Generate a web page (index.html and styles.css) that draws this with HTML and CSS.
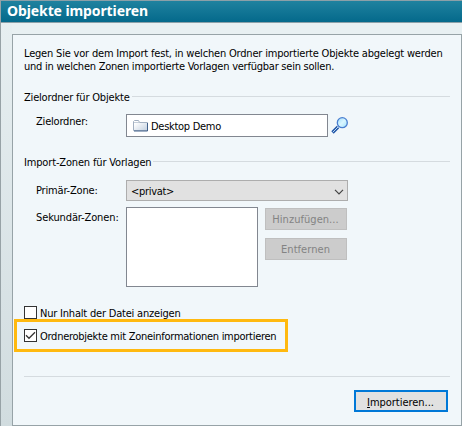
FILE: index.html
```html
<!DOCTYPE html>
<html lang="de">
<head>
<meta charset="utf-8">
<title>Objekte importieren</title>
<link rel="stylesheet" href="styles.css">
</head>
<body>
<div class="window">
  <header class="titlebar"><h1>Objekte importieren</h1></header>
  <main class="panel">
    <p class="intro"><span class="line-a">Legen Sie vor dem Import fest, in welchen Ordner importierte Objekte abgelegt werden</span><br><span class="line-b">und in welchen Zonen importierte Vorlagen verfügbar sein sollen.</span></p>

    <h2 class="legend legend-target"><span>Zielordner für Objekte</span></h2>
    <div class="row row-target">
      <label>Zielordner:</label>
      <div class="field">
        <svg class="folder" width="16" height="14" viewBox="0 0 16 14">
          <defs><linearGradient id="fg" x1="0" y1="0" x2="1" y2="1"><stop offset=".2" stop-color="#fff"/><stop offset="1" stop-color="#c3d0df"/></linearGradient></defs>
          <path d="M.5 11.5v-9l1-1h4l1 2h8v8z" fill="url(#fg)" stroke="#a3b0c1"/>
          <path d="M1 3.5h5" stroke="#c5ced9"/>
          <path d="M1 12h13.500V4" fill="none" stroke="#41608a"/>
        </svg>
        <span>Desktop Demo</span>
      </div>
      <svg class="search" width="18" height="18" viewBox="0 0 18 18">
        <defs><linearGradient id="lg" x1="0" y1="0" x2="1" y2="1"><stop offset="0" stop-color="#9fdcfa"/><stop offset=".5" stop-color="#d9f6ff"/><stop offset="1" stop-color="#9ce0fa"/></linearGradient></defs>
        <path d="M1.500 15.500l5.500-5.500" stroke="#2458a8" stroke-width="3.400"/>
        <path d="M2 15l5-5" stroke="#b9d9f2" stroke-width="1"/>
        <circle cx="11.300" cy="5.700" r="5" fill="url(#lg)" stroke="#4a7fd0" stroke-width="1.300"/>
      </svg>
    </div>

    <h2 class="legend legend-zones"><span>Import-Zonen für Vorlagen</span></h2>
    <div class="row row-primary">
      <label>Primär-Zone:</label>
      <div class="select"><span>&lt;privat&gt;</span>
        <svg width="10" height="6" viewBox="0 0 10 6"><path d="M1 .8l4 4 4-4" fill="none" stroke="#444" stroke-width="1.200"/></svg>
      </div>
    </div>
    <div class="row row-secondary">
      <label>Sekundär-Zonen:</label>
      <div class="listbox"></div>
      <div class="actions">
        <button class="btn" disabled>Hinzufügen...</button>
        <button class="btn" disabled>Entfernen</button>
      </div>
    </div>

    <div class="check check-content"><i class="box"></i><span>Nur Inhalt der Datei anzeigen</span></div>
    <div class="check check-folders"><i class="box"><svg width="11" height="11" viewBox="0 0 11 11"><path d="M1 5.300l3 3 6-6" fill="none" stroke="#333" stroke-width="1.300"/></svg></i><span>Ordnerobjekte mit Zoneinformationen importieren</span></div>

    <hr>
    <button class="btn primary"><u>I</u>mportieren...</button>
  </main>
</div>
</body>
</html>
```
FILE: styles.css
```css
* { box-sizing: border-box; }
body { margin: 0; overflow: hidden; }
.window {
  width: 462px;
  height: 426px;
  border-left: 1px solid #97a2a6;
  background: linear-gradient(#e8f0f2, #d1dcdf);
  font: 11px/13px "DejaVu Sans Condensed", "DejaVu Sans", sans-serif;
  color: #000;
  white-space: nowrap;
  display: flex;
  flex-direction: column;
}
.titlebar {
  height: 23px;
  border-top: 1px solid #8ba0a8;
  border-bottom: 1px solid #8ba0a8;
  background: linear-gradient(#1f829f, #04698b);
}
.titlebar h1 {
  margin: 0 0 0 6px;
  font: bold 14px/20px "Noto Sans", sans-serif;
  letter-spacing: -0.1px;
  color: #fff;
}
.panel {
  height: 392px;
  border: 1px solid #97a3a7;
  background: #f1f7fa;
  padding: 12px 11px 0;
  margin: 11px 0 0 11px;
  box-shadow: 0 -11px 0 #e8f0f2;
}
.intro { margin: 0; }
.line-a { letter-spacing: -0.19px; }
.line-b { letter-spacing: -0.24px; }
.legend {
  display: flex;
  font: inherit;
  height: 13px;
  margin: 0;
  gap: 2px;
}
.legend::after {
  content: "";
  flex: 1;
  height: 1px;
  margin-top: 5px;
  background: #d5dbdf;
}
.legend-target { margin-top: 18px; letter-spacing: -0.19px; }
.legend-zones { margin-top: 19px; letter-spacing: -0.16px; }
.row { display: flex; align-items: flex-start; padding-left: 12px; }
.row label { width: 90px; padding-top: 4px; letter-spacing: -0.18px; }
.row-target { margin-top: 10px; }
.row-target label { padding-top: 1px; letter-spacing: -0.2px; }
.row-primary { margin-top: 11px; }
.row-secondary { margin-top: 6px; }
.row-secondary label { letter-spacing: -0.12px; }
.field {
  display: flex;
  width: 202px;
  height: 23px;
  padding: 5px 0 0 6px;
  border: 1px solid #828790;
  background: #fff;
  letter-spacing: -0.28px;
}
.folder { margin-right: 2px; margin-top: -1px; }
.search { margin: 3px 0 0 3px; }
.select {
  display: flex;
  align-items: center;
  justify-content: space-between;
  width: 222px;
  height: 21px;
  padding: 2px 3px 0 4px;
  border: 1px solid #adadad;
  background: #e1e1e1;
  letter-spacing: -0.3px;
}
.listbox { width: 132px; height: 80px; border: 1px solid #828790; background: #fff; }
.actions { display: flex; flex-direction: column; gap: 8px; margin: 1px 0 0 7px; }
.btn {
  display: block;
  width: 82px;
  height: 22px;
  padding: 1px 1px 0 0;
  border: 1px solid #bfbfbf;
  background: #ccc;
  color: #838383;
  font: inherit;
  letter-spacing: 0.05px;
}
.check { display: flex; gap: 3px; }
.check span { padding-top: 1px; height: 13px; }
.check-content { margin-top: 19px; letter-spacing: -0.2px; }
.check-folders {
  width: 274px;
  height: 33px;
  margin-left: -10px;
  padding: 7px;
  border: 3px solid #ffb90f;
  letter-spacing: -0.27px;
}
.box { width: 13px; height: 13px; border: 1px solid #333; background: #fff; }
.box svg { display: block; }
hr { height: 1px; margin: 24px 0 13px; border: 0; background: #d5dbdf; }
.primary {
  width: 94px;
  margin-left: auto;
  margin-right: 2px;
  padding-top: 3px;
  border: 2px solid #0078d7;
  background: #e1e1e1;
  color: #000;
  letter-spacing: -0.03px;
}
```
